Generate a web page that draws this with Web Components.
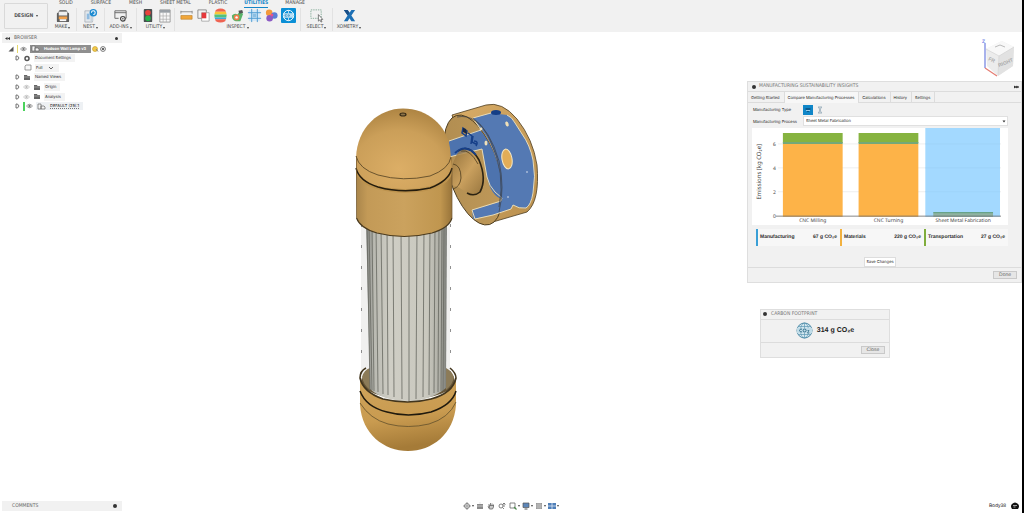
<!DOCTYPE html>
<html lang="en">
<head>
<meta charset="utf-8">
<title>Hudson Wall Lamp</title>
<style>
html{background:#000}
body{margin:0;min-height:100vh;display:flex;flex-direction:column;background:#fff;margin-right:2px;
 font:4px/7px Inter,"Liberation Sans",sans-serif;color:#222;text-rendering:geometricPrecision;
 --caps:"DejaVu Sans Condensed","DejaVu Sans",sans-serif;--panel:#f1f1f1;--line:#dcdcdc;overflow:hidden}
design-workspace{flex:1}
</style>
</head>
<body>
<app-toolbar></app-toolbar>
<design-workspace>
  <model-browser slot="left"></model-browser>
  <lamp-model slot="center"></lamp-model>
  <view-cube slot="right"></view-cube>
  <tool-dialog slot="right" heading="MANUFACTURING SUSTAINABILITY INSIGHTS" action="Done" more>
    <sustainability-insights></sustainability-insights>
  </tool-dialog>
  <tool-dialog slot="right" class="small" heading="CARBON FOOTPRINT" action="Close" roomy>
    <carbon-total></carbon-total>
  </tool-dialog>
</design-workspace>
<status-row></status-row>

<script>
const define = (name, html) => {
  const t = document.createElement('template');
  t.innerHTML = html;
  customElements.define(name, class extends HTMLElement {
    constructor() {
      super();
      this.attachShadow({mode: 'open'}).append(t.content.cloneNode(true));
    }
  });
};

const BASE = `*{box-sizing:border-box}button,select{font:inherit;color:inherit;text-rendering:inherit;white-space:nowrap;margin:0;padding:0;border:0;background:none}svg{display:block;flex:none}ul{list-style:none;margin:0;padding:0}`;

/* ---------- icons ---------- */
const ICONS = {
  make: '<path d="M3 5 5 2h7l2 3" fill="#777"/><rect x="2" y="5" width="13" height="10" rx="1" fill="#5e5e5e"/><rect x="4" y="4" width="9" height="4" fill="#eee"/><path d="M4 9h9v3H4z" fill="#f0a04b"/><path d="M5 12h7v2H5z" fill="#fafafa"/>',
  nest: '<path d="M2 3h8v12H2z" fill="#e3e8ec" stroke="#9aa4ad" stroke-width=".7"/><path d="M4 6h3v6H4z" fill="#8fbbe0"/><path d="M8 8h3v6H8z" fill="#c9d3da"/><circle cx="11" cy="5" r="4" fill="#1d8bd1"/><path d="M9 5a2 2 0 1 1 2 2" fill="none" stroke="#fff" stroke-width="1.1"/>',
  addins: '<path d="M2 3h12v8H9M2 3v8h4" fill="none" stroke="#666" stroke-width="1"/><path d="M2 5h12" stroke="#666"/><circle cx="10.500" cy="11.500" r="2.500" fill="#eee" stroke="#444" stroke-width="1.200"/><circle cx="10.500" cy="11.500" r=".8" fill="#444"/>',
  light: '<rect x="4" y="1" width="9" height="14" rx="1" fill="#4a4f50"/><circle cx="8.500" cy="5" r="3" fill="#e8433c"/><circle cx="8.500" cy="11" r="3" fill="#27b24a"/>',
  table: '<path d="M3 2h11v13H3z" fill="#f8f8f8" stroke="#888" stroke-width=".8"/><path d="M3 2h11v3H3z" fill="#9aa0a6"/><path d="M3 8.500h11M3 12h11M6.500 5v10M10 5v10" stroke="#aaa" stroke-width=".7"/>',
  measure: '<path d="M2 4h12M2 3v3M14 3v3" stroke="#777" stroke-width=".8"/><path d="M2 8h12v4H2z" fill="#f0a63a" stroke="#b87a22" stroke-width=".6"/>',
  interfere: '<path d="M2 2h9v9H2z" fill="#f2f2f2" stroke="#777" stroke-width=".8"/><path d="M6 5h8v9H6z" fill="#fff" stroke="#999" stroke-width=".8"/><path d="M6 5h5v6H6z" fill="#e5383b"/>',
  zebra: '<clipPath id="z"><path d="M3 2q5-3 10 0 3 6 0 12-5 3-10 0-3-6 0-12z"/></clipPath><g clip-path="url(#z)"><path d="M0 0h16v4H0z" fill="#ef6351"/><path d="M0 4h16v3H0z" fill="#f8c537"/><path d="M0 7h16v3H0z" fill="#52c27a"/><path d="M0 10h16v2H0z" fill="#3fa7dc"/><path d="M0 12h16v4H0z" fill="#ef6351"/></g>',
  draft: '<path d="M2 8q3-3 6-1l2-3 4 2-3 8H6q-4-1-4-6z" fill="#58b368"/><path d="M9 3l4-1 1 3-4 1z" fill="#555"/><circle cx="7" cy="10" r="3" fill="#f07c4b"/><circle cx="7" cy="10" r="1.300" fill="#fff"/>',
  section: '<path d="M2 2h12v12H2z" fill="#d5e8f7"/><path d="M5 1v14M11 1v14M1 5h14M1 11h14" stroke="#4d9ad1" stroke-width="1"/><path d="M6 6h4v4H6z" fill="#8abfe4"/>',
  mass: '<circle cx="5.500" cy="5" r="3.500" fill="#f39a3c"/><circle cx="11" cy="8" r="3.500" fill="#5b7fd6"/><circle cx="6" cy="11" r="3.500" fill="#8c5bc4"/><circle cx="8.500" cy="7.500" r="1.500" fill="#e9508d"/>',
  co2: '<rect width="16" height="16" rx="1" fill="#0a8fd6"/><circle cx="8" cy="8" r="5.500" fill="none" stroke="#fff" stroke-width="1"/><path d="M2.500 6h11M2.500 10h11M8 2.500v3M8 10.500v3" stroke="#fff" stroke-width=".7"/><path d="M3 6.500h10v3H3z" fill="#bfe3f7"/><path d="M6 7.200a1 1 0 1 0 0 1.600" fill="none" stroke="#0a6fa8" stroke-width=".7"/><circle cx="8.200" cy="8" r=".8" fill="none" stroke="#0a6fa8" stroke-width=".6"/>',
  select: '<path d="M2 2h11v9H2z" fill="none" stroke="#6c9c84" stroke-width=".8" stroke-dasharray="1.500 1"/><path d="M10 7v7l1.600-1.400 1.200 2.400 1-.5-1.100-2.300h2z" fill="#fff" stroke="#444" stroke-width=".7"/>',
  xom: '<path d="M2 2h4l2 3 2-3h4l-4 6 4 6h-4l-2-3-2 3H2l4-6z" fill="#1c6fb4"/><path d="M2 2h4l2 3-2 3z" fill="#1a4f87"/>'
};
const icon = (n, s = 15) => `<svg width="${s}" height="${s}" viewBox="0 0 16 16" aria-hidden="true">${ICONS[n]}</svg>`;

/* ---------- toolbar ---------- */
const group = (label, cls, names) => `<div class="group ${cls}"><div class="icons">${names.map(n => `<button aria-label="${n}">${icon(n)}</button>`).join('')}</div><button class="label">${label}<i></i></button></div>`;
define('app-toolbar', `<style>${BASE}
:host{display:flex;height:32px;background:var(--panel);font:5px/7px var(--caps);color:#4a4a4a}
.design{margin:3px 0 3px 4px;width:44px;border:1px solid #d9d9d9;border-radius:1px;font-weight:bold;color:#555;display:flex;align-items:center;justify-content:center}
.main{flex:1}
nav{display:flex;gap:18px;padding-left:11px;height:8px}
nav a{color:inherit;text-decoration:none}
nav a.on{color:#1486c8;font-weight:bold;border-bottom:1px solid #1486c8;margin:0 -1px}
.tools{display:flex;height:23px;padding-left:1px}
.group{display:flex;flex-direction:column;align-items:center;border-right:1px solid #e2e2e2;flex:none}
.group:last-child{border:0}
.icons{display:flex;justify-content:center;gap:2px}
.label{height:8px;padding-top:1px;display:flex;align-items:center}
i{border:1px solid transparent;border-top-color:#444;border-top-width:2px;border-bottom:0;margin-left:1px}
.a{width:28px}.d{width:38px}.e{width:126px}.f{width:32px}
</style>
<button class="design">DESIGN&nbsp;<i></i></button>
<div class="main">
<nav><a href="#solid">SOLID</a><a href="#surface">SURFACE</a><a href="#mesh">MESH</a><a href="#sheet">SHEET METAL</a><a href="#plastic">PLASTIC</a><a href="#utilities" class="on">UTILITIES</a><a href="#manage">MANAGE</a></nav>
<div class="tools">
${group('MAKE', 'a', ['make'])}${group('NEST', 'a', ['nest'])}${group('ADD-INS', 'f', ['addins'])}${group('UTILITY', 'd', ['light', 'table'])}${group('INSPECT', 'e', ['measure', 'interfere', 'zebra', 'draft', 'section', 'mass', 'co2'])}${group('SELECT', 'f', ['select'])}${group('XOMETRY', 'f', ['xom'])}
</div></div>`);

/* ---------- workspace ---------- */
define('design-workspace', `<style>${BASE}
:host{display:grid;grid-template-columns:123px 1fr 275px}
.left{padding:1px 0 0 2px}
.center{display:flex;justify-content:center;align-items:flex-start;padding:63px 0 0 19px}
.right{display:flex;flex-direction:column;align-items:flex-start}
::slotted(view-cube){align-self:flex-end;margin:5px 5px 4px 0}
::slotted(tool-dialog){align-self:stretch}
::slotted(.small){align-self:flex-start;width:130px;margin:26px 0 0 13px}
</style>
<div class="left"><slot name="left"></slot></div><div class="center"><slot name="center"></slot></div><div class="right"><slot name="right"></slot></div>`);

/* ---------- browser ---------- */
const EYE = (c = '#777') => `<svg width="7" height="6" viewBox="0 0 7 6"><path d="M.5 3Q3.500-.5 6.500 3 3.500 6.500.5 3z" fill="none" stroke="${c}" stroke-width=".7"/><circle cx="3.500" cy="3" r="1.200" fill="${c}"/></svg>`;
const FOLDER = '<svg width="8" height="7" viewBox="0 0 8 7"><path d="M1 1h3l.5 1H7v4H1z" fill="#666"/><path d="M1 3h6" stroke="#ccc" stroke-width=".5"/></svg>';
const ARROW = '<svg width="5" height="6" viewBox="0 0 5 6"><path d="M1 1v4h1.500L4 3 2.500 1z" fill="#f4f4f4" stroke="#555" stroke-width=".8"/></svg>';
const PART = '<svg width="9" height="7" viewBox="0 0 9 7"><path d="M1 1h3v5H1zM4 3h3l1 1v2H4z" fill="#f4f4f4" stroke="#666" stroke-width=".7"/></svg>';
define('model-browser', `<style>${BASE}
:host{display:block}
header{display:flex;align-items:center;gap:4px;background:var(--panel);height:10px;padding:0 4px 0 3px;width:120px;font:5px/7px var(--caps);color:#666}
header b{margin-left:auto;width:3px;height:3px;border-radius:50%;background:#333}
ul{display:grid;grid-auto-rows:1fr;height:68px;width:max-content;padding-top:1px}
li{display:flex;align-items:center;gap:3px;padding-left:13px}
li.root{padding-left:6px}
span{background:#f3f3f3;line-height:8px;padding:0 4px 0 1px;display:flex;align-items:center;gap:4px}
.root span{background:#8f8f8f;color:#fff;font-weight:bold;padding-right:5px}
.root em{width:1px;height:8px;background:#e6d96a;margin-right:-1px}
.full{padding-left:22px}
.def em{width:2px;height:9px;background:#4bd25c;margin-right:-2px}
.def span{background:#eef1f4;text-decoration:underline dotted #777}
.marks{margin-left:-2px}
</style>
<header><svg width="5" height="5" viewBox="0 0 5 5"><path d="M0 2.500 2.500 1v3zM2.500 2.500 5 1v3z" fill="#333"/></svg>BROWSER<b></b></header>
<ul>
<li class="root"><svg width="6" height="6" viewBox="0 0 6 6"><path d="M5.500.5v5h-5z" fill="#555"/></svg><em></em>${EYE()}<span>${PART}Hudson Wall Lamp v3</span><svg class="marks" width="14" height="8" viewBox="0 0 14 8"><circle cx="3" cy="4" r="2.500" fill="#f3c94a" stroke="#c29a22" stroke-width=".6"/><path d="M4 4l2 2.500" stroke="#888"/><circle cx="11" cy="4" r="2.400" fill="#fff" stroke="#555" stroke-width=".8"/><circle cx="11" cy="4" r="1" fill="#333"/></svg></li>
<li>${ARROW}<svg width="8" height="7" viewBox="0 0 8 7"><circle cx="4" cy="3.500" r="2" fill="none" stroke="#555" stroke-width="1.500"/></svg><span>Document Settings</span></li>
<li class="full"><svg width="8" height="7" viewBox="0 0 8 7"><path d="M2 1h5v5H1V2z" fill="#f8f8f8" stroke="#777" stroke-width=".7"/></svg><span>Full <svg width="8" height="6" viewBox="0 0 8 6"><path d="M2 2l2 2 2-2" fill="none" stroke="#555" stroke-width=".9"/></svg></span></li>
<li>${ARROW}${FOLDER}<span>Named Views</span></li>
<li>${ARROW}${EYE('#bbb')}${FOLDER}<span>Origin</span></li>
<li>${ARROW}${EYE('#bbb')}${FOLDER}<span>Analysis</span></li>
<li class="def">${ARROW}<em></em>${EYE()}<span>${PART}DEFAULT (25):1</span></li>
</ul>`);

/* ---------- 3D model ---------- */
let fins = '';
[[367,370],[369,372],[372,374],[376,378],[381,383],[387,388],[393,394],[401,402],[409,409],[417,416],[424,423],[430,429],[435,434],[439,438],[442,441],[444,443]].forEach(([a, b]) => {
  fins += `<path d="M${a} 225 ${b} ${Math.round(401 - Math.abs(b - 408) * .3)}"/>`;
});
define('lamp-model', `<style>:host{display:block}svg{display:block}</style>
<svg width="210" height="365" viewBox="340 95 210 365" role="img" aria-label="Wall lamp model">
<defs>
<radialGradient id="dome" cx=".45" cy=".75" r=".8"><stop offset="0" stop-color="#dcae66"/><stop offset=".6" stop-color="#cb9f59"/><stop offset="1" stop-color="#a9803f"/></radialGradient>
<linearGradient id="cyl"><stop offset="0" stop-color="#a9854a"/><stop offset=".12" stop-color="#c39a57"/><stop offset=".5" stop-color="#cba25e"/><stop offset=".88" stop-color="#c0964f"/><stop offset="1" stop-color="#98743a"/></linearGradient>
<linearGradient id="bowl" x1="0" y1="0" x2=".2" y2="1"><stop offset="0" stop-color="#cfa45c"/><stop offset=".6" stop-color="#c99b50"/><stop offset="1" stop-color="#a57b38"/></linearGradient>
<linearGradient id="face" x1="0" y1="0" x2="1" y2="1"><stop offset="0" stop-color="#b08c50"/><stop offset="1" stop-color="#c09a5a"/></linearGradient>
<linearGradient id="rim" x1="0" y1="0" x2="1" y2="1"><stop offset="0" stop-color="#d9ad68"/><stop offset="1" stop-color="#b98f4d"/></linearGradient>
<linearGradient id="tube"><stop offset="0" stop-color="#858783"/><stop offset=".1" stop-color="#b9b9b1"/><stop offset=".3" stop-color="#cfcec5"/><stop offset=".75" stop-color="#c9c8be"/><stop offset=".92" stop-color="#adada5"/><stop offset="1" stop-color="#777974"/></linearGradient>
<linearGradient id="neck" x1="0" y1="0" x2="1" y2="1"><stop offset="0" stop-color="#8e6d38"/><stop offset=".5" stop-color="#cfa461"/><stop offset="1" stop-color="#8e6d38"/></linearGradient>
</defs>
<!-- wall mount -->
<path d="M452 115 486 105Q502 101 517 119 533 139 537 165 540 201 527 212L486 224z" fill="url(#rim)" stroke="#4c3c20" stroke-width=".8"/>
<ellipse cx="473" cy="170" rx="25" ry="57" transform="rotate(-17 473 170)" fill="url(#face)" stroke="#4c3c20" stroke-width=".9"/>
<path d="M473 118 491 113 507 115Q512 117 515 123L522 134Q530 145 533 160 536 176 533 193 531 205 526 208 519 209 513 205L511 209 493 215 473 219 472 210 499 202 502 198Q501 154 482 130z" fill="#5479b3"/>
<path d="M449 141 480 130Q488 139 494 153 504 178 502 199 491 196 487 177L482 149 449 157z" fill="#4d73ae"/>
<path d="M449 141 481 130 473 118 491 113M507 115Q512 117 515 123L522 134Q530 145 533 160 536 176 533 193 531 205 526 208 519 209 513 205L511 209 493 215 475 219 472 210 501 201 502 198 495 192Q489 186 487 177L482 149 449 157" fill="none" stroke="#f0e3bd" stroke-width=".9"/>
<path d="M473 118Q490 130 499 161 505 188 499 212M457 117Q477 113 490 140 506 173 499 207" fill="none" stroke="#3b3f46" stroke-width=".7"/>
<ellipse cx="507" cy="159" rx="5" ry="10" transform="rotate(-10 507 159)" fill="#e2ad57" stroke="#f5e8c5"/>
<ellipse cx="496" cy="112.500" rx="5" ry="2.500" fill="#153e86"/><ellipse cx="507" cy="124" rx="1.600" ry="2.600" transform="rotate(-20 507 124)" fill="#f0e0b8"/><ellipse cx="486" cy="143" rx="1.500" ry="2.500" fill="#f0e0b8"/><circle cx="527" cy="172" r="1" fill="#a8bbd8"/><circle cx="508" cy="197" r="1" fill="#a8bbd8"/><circle cx="481" cy="129" r="1.400" fill="#f0e0b8"/>
<path d="M463 128 467 131 466 136 462 133zM468 133l4 3-1 8M473 136l-1 6 4 2M474 141q5 0 2 5" fill="none" stroke="#163f88" stroke-width="1.500"/><path d="m463 128 3 1 1 5-4-2z" fill="#1b2740"/>
<path d="M457 154Q466 144 477 158 488 179 481 192 476 197 468 193L458 187 452 185V165z" fill="url(#neck)" opacity=".8"/>
<path d="M458 151Q469 143 479 160 487 179 480 192 474 197 467 193" fill="none" stroke="#2b2313" stroke-width="1.600"/>
<path d="M453 164Q461 165 461 178 460 187 453 189M461 151Q470 149 478 164" fill="none" stroke="#3c2f17" stroke-width=".7"/>
<path d="M455 153Q466 143 476 155" fill="none" stroke="#173f88" stroke-width="1.800"/>
<!-- glass tube and lower cap opening -->
<ellipse cx="408" cy="381" rx="47" ry="18" fill="#675638"/>
<path d="M361 220H450V377Q440 390 408 392 376 390 361 377z" fill="#f0f0ef"/>
<path d="M361.500 224V372M450.500 224V372" stroke="#666" stroke-width=".9" stroke-dasharray="3 18" opacity=".8"/>
<path d="M362 377Q364 370 370 368V390Q363 384 362 377zM454 377Q452 371 446 368V390Q453 384 454 377z" fill="#8c7b58"/>
<path d="M366 220H447L446 388Q430 401 408 401 383 401 370 389z" fill="url(#tube)"/>
<g fill="none" stroke="#66675f" stroke-width=".8">${fins}</g>
<!-- lower cap -->
<path d="M360 378V405C362 434 384 451 408 451S454 434 456 405V378Q453 393 431 399 408 405 383 399 363 392 360 378z" fill="url(#bowl)"/>
<path d="M366 368Q360 371 360 378 363 392 383 399 408 405 431 399 453 393 456 378 456 373 450 368" fill="none" stroke="#42351d" stroke-width="1.600"/>
<path d="M360 391Q366 407 387 412 408 418 431 412 452 405 456 391" fill="none" stroke="#201a0e" stroke-width="1.500"/>
<path d="M360 403Q370 419 388 424 408 429 429 424 449 418 456 402" fill="none" stroke="#62502c" stroke-width=".8"/>
<!-- upper cap -->
<path d="M356 158H452V218Q449 228 432 233 404 240 377 233 360 228 356.500 218z" fill="url(#cyl)"/>
<path d="M356 158C357 127 379 108.500 403 108.500 428 108.500 447 126 450 148L452 168Q449 180 430 186 403 192 377 186 358 180 356 168z" fill="url(#dome)"/>
<path d="M356 168Q358 180 377 186 403 192 430 187 450 180 452 168V174Q446 192 404 193 363 191 356 174z" fill="#bd934e"/>
<path d="M356 156Q359 169 378 175 403 182 430 176 449 169 451 157" fill="none" stroke="#5f4b28" stroke-width=".9"/>
<path d="M356 168Q359 181 378 187 403 194 430 188 449 181 452 168" fill="none" stroke="#241c0d" stroke-width="1.400"/>
<path d="M356.500 218Q360 228 377 233 404 240 432 233 449 228 452 218" fill="none" stroke="#4b3b1f" stroke-width="1.100"/>
<path d="M356.500 156V218M452 168V218" stroke="#705731" stroke-width=".7"/>
<ellipse cx="403" cy="114.500" rx="3" ry="1.500" fill="#8b7247" stroke="#372b16" stroke-width="1.200"/>
</svg>`);

/* ---------- view cube ---------- */
define('view-cube', `<style>:host{display:block}svg{display:block}text{font:bold 5px "Liberation Sans",sans-serif;fill:#aaa}</style>
<svg width="40" height="40" viewBox="0 0 40 40">
<path d="M9 12 25 4 37 10 36 29 21 39 10 29z" fill="#ececec"/><path d="M9 12 25 4 37 10 22 19z" fill="#f8f8f8"/><path d="M22 19 37 10 36 29 21 39z" fill="#e2e2e2"/>
<path d="M9 12 22 19 37 10M22 19 21 38" fill="none" stroke="#d4d4d4" stroke-width=".7"/>
<path d="m18 10 5-2 5 2" fill="none" stroke="#bbb" stroke-width="1"/>
<text x="22" y="30" transform="rotate(-22 22 30)">RIGHT</text><text x="11" y="23" transform="rotate(25 11 23)">FR</text>
<path d="M8 6V31" stroke="#6f7fe0" stroke-width="1.200"/><path d="M8 31 20 39" stroke="#e57b70" stroke-width="1.200"/><text x="5" y="6" style="fill:#7384e8">Z</text>
</svg>`);

/* ---------- dialog frame ---------- */
customElements.define('tool-dialog', class extends HTMLElement {
  constructor() { super(); this.attachShadow({mode: 'open'}); }
  connectedCallback() {
    this.shadowRoot.innerHTML = `<style>${BASE}
:host{display:block;box-sizing:border-box;background:var(--panel);border:1px solid #dedede}
header{display:flex;align-items:center;gap:3px;height:10px;padding:0 2px 0 4px;font:5px/7px var(--caps);color:#777;border-bottom:1px solid var(--line)}
:host([roomy]) header{gap:4px;padding-left:2px}
header i{width:4px;height:4px;border-radius:50%;background:#333}
header svg{margin-left:auto}
footer{display:flex;justify-content:flex-end;border-top:1px solid var(--line);padding:3px 4px}
footer button{width:24px;height:8px;font:5px/6px "Liberation Sans",sans-serif;border:1px solid #c9c9c9;background:#e6e6e6;color:#666}
</style><header><i></i><span>${this.getAttribute('heading')}</span>${this.hasAttribute('more') ? '<svg width="5" height="4" viewBox="0 0 5 4"><path d="M0 1l2.500 1L0 3zM2.500 1 5 2 2.500 3z" fill="#222" stroke="#222" stroke-width=".5"/></svg>' : ''}</header><slot></slot><footer><button>${this.getAttribute('action')}</button></footer>`;
  }
});

define('carbon-total', `<style>
:host{display:flex;align-items:center;justify-content:center;gap:4px;height:22px;font:bold 7px/10px "Liberation Sans",sans-serif;color:#222}</style>
<svg width="17" height="17" viewBox="0 0 17 17"><circle cx="8.500" cy="8.500" r="7.500" fill="#d4e7ef" stroke="#3a7d9c" stroke-width=".9"/><ellipse cx="8.500" cy="8.500" rx="4" ry="7.500" fill="none" stroke="#5f9ab5" stroke-width=".7"/><path d="M2 4.500h13M2 12.500h13M8.500 1v15" stroke="#5f9ab5" stroke-width=".7"/><path d="M1 6h15v5H1z" fill="#c0dce8"/><path d="M6 7.300a1.500 1.500 0 1 0 0 2.400" fill="none" stroke="#22627f" stroke-width=".9"/><circle cx="8.600" cy="8.500" r="1.500" fill="none" stroke="#22627f" stroke-width=".9"/><path d="M11.500 8.500h1.500l-1.500 2.500h2" fill="none" stroke="#22627f" stroke-width=".7"/></svg>
<span>314 g CO₂e</span>`);

define('emissions-chart', `<style>:host{display:block;background:#fff}svg{display:block;width:100%}text{font:5px "Noto Sans",sans-serif;fill:#444}.ax{font-size:6px}</style>
<svg viewBox="0 0 257 97" role="img" aria-label="Emissions by process">
<path d="M26 16h224M26 40h224M26 64h224" stroke="#eee"/>
<path d="M31 16h60v73H31zM107 16h60v73h-60z" fill="#fdb348"/><path d="M31 5h60v10H31zM107 5h60v10h-60z" fill="#86b340"/><path d="M31 14h60v2H31zM107 14h60v2h-60z" fill="#74a878"/>
<path d="M174 0h75v89h-75z" fill="#a3d9ff"/><path d="M174 16h75M174 40h75M174 64h75" stroke="#9bd0f5" stroke-width=".6"/>
<path d="M182 85h60v4h-60z" fill="#8fb3a2"/><path d="M182 85h60" stroke="#5d9a78"/>
<path d="M24 88.500H250" stroke="#666" stroke-width=".8"/>
<g text-anchor="end"><text x="24" y="18">6</text><text x="24" y="42">4</text><text x="24" y="66">2</text><text x="24" y="90">0</text></g>
<g text-anchor="middle"><text x="61" y="94">CNC Milling</text><text x="137" y="94">CNC Turning</text><text x="212" y="94">Sheet Metal Fabrication</text></g>
<text class="ax" text-anchor="middle" transform="translate(9 44) rotate(-90)">Emissions [kg CO₂e]</text>
</svg>`);

define('sustainability-insights', `<style>${BASE}
:host{display:block}
nav{display:flex;height:11px;border-bottom:1px solid var(--line);align-items:stretch}
nav button{padding:0 4px 0 3px;border-right:1px solid var(--line)}
nav .on{height:11px;background:#f7f7f7}
.body{padding:0 13px 0 4px}
.row{display:flex;align-items:center;height:12px}
.row .k{width:51px;padding-left:1px;white-space:nowrap}
.type{height:11px;margin-top:1px}
.type button{width:10px;height:10px;margin-right:2px;display:grid;place-items:center}
.type .on{background:#0f86c8}
.sel{flex:1;display:grid}
.sel>*{grid-area:1/1}
.sel svg{place-self:center end;margin-right:2px}
select{height:10px;background:#fff;border:1px solid #e0e0e0;appearance:none;padding:0 2px;line-height:8px}
emissions-chart{margin-top:1px}
ul{display:flex;margin:4px 0 0 4px;background:#f7f7f7}
li{flex:1;display:flex;justify-content:space-between;border-left:2px solid;padding:0 3px 0 2px;font:bold 5px/17px "Liberation Sans",sans-serif}
li span{color:#2b2b2b}
.save{display:block;margin:11px auto 0;width:32px;height:10px;background:#fff;border:1px solid #ddd;line-height:8px}
</style>
<nav><button>Getting Started</button><button class="on">Compare Manufacturing Processes</button><button>Calculations</button><button>History</button><button>Settings</button></nav>
<div class="body">
<div class="row type"><span class="k">Manufacturing Type</span><button class="on" aria-label="Subtractive"><svg width="8" height="8" viewBox="0 0 8 8"><path d="M1.500 2h5v2h-5zM3 5h2v1H3z" fill="#0a5c90"/><path d="M2 4.500h4" stroke="#cfe9f8" stroke-width=".7"/></svg></button><button aria-label="Additive"><svg width="6" height="8" viewBox="0 0 6 8"><path d="M1 1h4M1 7h4M1.500 1 4.500 7M4.500 1 1.500 7" stroke="#8ba3b3" stroke-width=".8" fill="none"/></svg></button></div>
<div class="row"><label class="k" for="p">Manufacturing Process</label><div class="sel"><select id="p"><option>Sheet Metal Fabrication</option></select><svg width="4" height="3" viewBox="0 0 4 3"><path d="M.5.5h3L2 2.500z" fill="#333"/></svg></div></div>
<emissions-chart></emissions-chart>
<ul><li style="border-color:#3a9fd6"><span>Manufacturing</span><span>67 g CO₂e</span></li><li style="border-color:#f2b13f"><span>Materials</span><span>220 g CO₂e</span></li><li style="border-color:#80ad3c"><span>Transportation</span><span>27 g CO₂e</span></li></ul>
<button class="save">Save Changes</button>
</div>`);

/* ---------- bottom row ---------- */
const NAV = {
  Orbit: '<circle cx="4" cy="4" r="2.500" fill="none" stroke="#666" stroke-width=".8"/><path d="M4 0v8M0 4h8" stroke="#777" stroke-width=".7"/>',
  Look: '<path d="M1 2h6v5H1z" fill="#8a8a8a"/><path d="M1 4h6M3 1h2" stroke="#ddd" stroke-width=".7"/>',
  Pan: '<path d="M2 4V2M3.500 3.500V1M5 3.500V1.500M6.500 4V2.500M1 4.500 2.500 7h3l1-2V3.500h-4v2z" fill="#ccc" stroke="#666" stroke-width=".8"/>',
  Zoom: '<circle cx="3" cy="4" r="2" fill="none" stroke="#666" stroke-width=".8"/><path d="M4.500 5.500 6 7M6 1v4M4.500 2.500 6 1l1.500 1.500" stroke="#666" stroke-width=".8" fill="none"/>',
  Fit: '<path d="M1 1h5v5H1z" fill="none" stroke="#666" stroke-width=".8"/><path d="M5 5l2.500 2.500" stroke="#4c8a4c" stroke-width="1.200"/>',
  Display: '<path d="M1 1h6v4.500H1z" fill="#5d86b8" stroke="#555" stroke-width=".7"/><path d="M2.500 7h3" stroke="#555"/>',
  Grid: '<path d="M1 1h6v6H1z" fill="#999"/><path d="M1 3h6M1 5h6M3 1v6M5 1v6" stroke="#ccc" stroke-width=".6"/>',
  Viewports: '<path d="M0 1h8v6H0z" fill="#4f7fb8"/><path d="M0 4h8M4 1v6" stroke="#dfe9f5" stroke-width=".8"/>'
};
const drop = ['Orbit', 'Fit', 'Display', 'Grid', 'Viewports'];
define('status-row', `<style>${BASE}
:host{display:grid;grid-template-columns:1fr auto 1fr;align-items:center;height:14px;padding:0 3px 0 2px}
.comments{display:flex;align-items:center;justify-content:space-between;width:120px;height:10px;background:var(--panel);padding:0 5px 0 10px;font:5px/7px var(--caps);color:#666}
.comments b{width:4px;height:4px;border-radius:50%;background:#333}
nav{display:flex;gap:2px}
nav button{display:flex;align-items:center;gap:1px}
nav button:not(.d){margin-right:1px}
nav i{border:1px solid transparent;border-top:2px solid #444;border-bottom:0}
.user{display:flex;justify-content:flex-end;align-items:center;gap:5px;font:5px/7px "Liberation Sans",sans-serif}
</style>
<div class="comments">COMMENTS<b></b></div>
<nav>${Object.keys(NAV).map(k => `<button aria-label="${k}" ${drop.includes(k) ? 'class="d"' : ''}><svg width="8" height="8" viewBox="0 0 8 8">${NAV[k]}</svg>${drop.includes(k) ? '<i></i>' : ''}</button>`).join('')}</nav>
<div class="user">Body38<svg width="8" height="8" viewBox="0 0 8 8"><path d="M1 2Q4-1 7 2 9 4 7 7H1Q-1 4 1 2z" fill="#111"/><path d="M2 3.500h4M2.500 5h2" stroke="#ddd" stroke-width=".7"/></svg></div>`);
</script>
</body>
</html>
